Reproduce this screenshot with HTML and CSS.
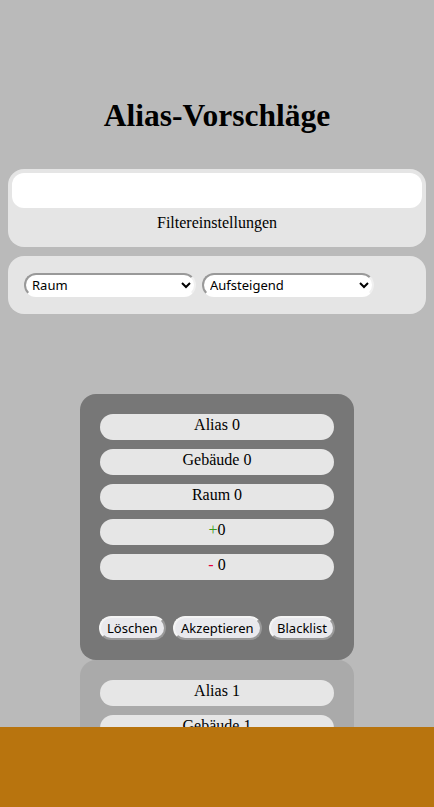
FILE: index.html
```html
<!DOCTYPE html>
<html lang="de">
<head>
<meta charset="utf-8">
<title>Alias-Vorschläge</title>
<link rel="stylesheet" href="styles.css">
</head>
<body>
<header class="header">
  <h1 class="title">Alias-Vorschläge</h1>
</header>
<main class="main">
  <section class="panel filter-panel">
    <input class="search" type="text">
    <div class="filter-label">Filtereinstellungen</div>
  </section>
  <section class="panel sort-panel">
    <select class="sel"><option>Raum</option></select>
    <select class="sel"><option>Aufsteigend</option></select>
  </section>
  <section class="list">
    <article class="card card-dark">
      <div class="field">Alias 0</div>
      <div class="field">Gebäude 0</div>
      <div class="field">Raum 0</div>
      <div class="field"><span class="plus">+</span>0</div>
      <div class="field"><span class="minus">-</span> 0</div>
      <div class="actions">
        <button class="btn">Löschen</button>
        <button class="btn">Akzeptieren</button>
        <button class="btn">Blacklist</button>
      </div>
    </article>
    <article class="card card-light">
      <div class="field">Alias 1</div>
      <div class="field">Gebäude 1</div>
      <div class="field">Raum 1</div>
      <div class="field"><span class="plus">+</span>1</div>
      <div class="field"><span class="minus">-</span> 1</div>
      <div class="actions">
        <button class="btn">Löschen</button>
        <button class="btn">Akzeptieren</button>
        <button class="btn">Blacklist</button>
      </div>
    </article>
  </section>
</main>
<footer class="footer"></footer>
</body>
</html>
```
FILE: styles.css
```css
html, body {
  margin: 0;
  padding: 0;
}
body {
  background: #bababa;
  font-family: "Liberation Serif", serif;
  color: #000;
  padding-bottom: 120px;
}
.header {
  padding-top: 97px;
}
.title {
  margin: 0;
  text-align: center;
  font-size: 31.5px;
  line-height: 37px;
  font-weight: bold;
}
.main {
  padding: 0 8px;
  margin-top: 35px;
}
.panel {
  background: #e5e5e5;
  border-radius: 16px;
}
.filter-panel {
  padding: 4px 4px 14px;
}
.search {
  display: block;
  box-sizing: border-box;
  width: 100%;
  height: 35px;
  border: none;
  border-radius: 12px;
  background: #fff;
  outline: none;
}
.filter-label {
  text-align: center;
  font-size: 16px;
  line-height: 20px;
  margin-top: 5px;
}
.sort-panel {
  margin-top: 9px;
  height: 58px;
  box-sizing: border-box;
  padding: 17px 16px;
  display: flex;
  align-items: flex-start;
  gap: 6px;
}
.sel {
  box-sizing: border-box;
  width: 172px;
  height: 24px;
  font-family: "Noto Sans", sans-serif;
  font-size: 13px;
  background: #fff;
  border: 2px solid;
  border-color: #999 #f0f0f0 #fff #999;
  border-radius: 12px;
  padding: 0 2px;
  color: #000;
}
.list {
  margin: 80px auto 0;
  width: 274px;
}
.card {
  border-radius: 16px;
  padding: 20px 20px 20px;
  display: flex;
  flex-direction: column;
  gap: 9px;
}
.card-dark {
  background: #777;
}
.card-light {
  background: #aaa;
}
.field {
  height: 26px;
  box-sizing: border-box;
  background: #e6e6e6;
  border-radius: 13px;
  text-align: center;
  font-size: 16px;
  line-height: 20px;
  padding-top: 1px;
}
.plus {
  color: #3a9a1a;
}
.minus {
  color: #e8003c;
}
.actions {
  display: flex;
  justify-content: space-between;
  margin: 27px -1px 0;
}
.btn {
  box-sizing: border-box;
  height: 24px;
  padding: 0 6px;
  font-family: "Noto Sans", sans-serif;
  font-size: 13px;
  color: #000;
  background: #e9e9ed;
  border: 2px solid;
  border-color: #f4f4f4 #999 #999 #f4f4f4;
  border-radius: 12px;
}
.footer {
  position: fixed;
  left: 0;
  right: 0;
  bottom: 0;
  height: 80px;
  background: #b8740e;
}
```
